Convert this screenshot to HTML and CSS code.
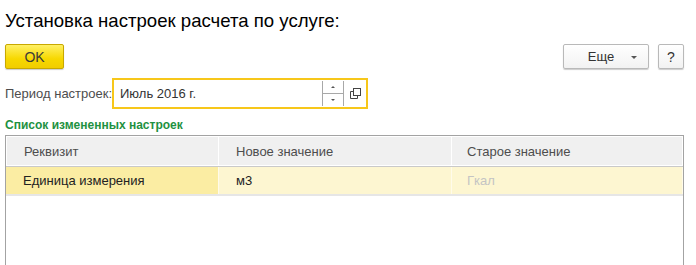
FILE: index.html
```html
<!DOCTYPE html>
<html lang="ru">

<head>
    <meta charset="UTF-8">
    <title>Установка настроек расчета по услуге</title>
    <link rel="stylesheet" href="styles.css">
</head>

<body>
    <div class="form">
        <h1 class="form-title">Установка настроек расчета по услуге:</h1>

        <!-- Command bar -->
        <div class="command-bar">
            <button class="btn btn-ok">OK</button>
            <div class="command-bar__right">
                <button class="btn btn-more">Еще <span class="btn-more__arrow"></span></button>
                <button class="btn btn-help">?</button>
            </div>
        </div>

        <!-- Period field -->
        <div class="field-row">
            <label class="field-label">Период настроек:</label>
            <div class="field-input">
                <span class="field-input__value">Июль 2016 г.</span>
                <div class="spin">
                    <span class="spin__up"></span>
                    <span class="spin__down"></span>
                </div>
                <span class="field-input__open">
                    <svg width="11" height="11" viewBox="0 0 11 11">
                        <rect x="3.5" y="0.5" width="7" height="7" fill="none" stroke="#444" />
                        <path d="M0.5 3.5 H3 M0.5 3.5 V10.5 H7.5 V8" fill="none" stroke="#444" />
                    </svg>
                </span>
            </div>
        </div>

        <div class="group-title">Список измененных настроек</div>

        <!-- Table -->
        <div class="grid">
            <div class="grid__row grid__head">
                <div class="grid__cell col-1">Реквизит</div>
                <div class="grid__cell col-2">Новое значение</div>
                <div class="grid__cell col-3">Старое значение</div>
            </div>
            <div class="grid__row grid__current">
                <div class="grid__cell col-1">Единица измерения</div>
                <div class="grid__cell col-2">м3</div>
                <div class="grid__cell col-3 muted">Гкал</div>
            </div>
            <div class="grid__empty"></div>
        </div>
    </div>
</body>

</html>
```

FILE: styles.css
```css
* {
    margin: 0;
    padding: 0;
    box-sizing: border-box;
}

body {
    font-family: "Liberation Sans", Arial, sans-serif;
    font-size: 13px;
    color: #333333;
    background-color: #ffffff;
    overflow: hidden;
}

.form {
    padding: 10px 12px 0 5px;
}

.form-title {
    font-size: 18.6px;
    font-weight: normal;
    line-height: 22px;
    color: #000000;
}

/* Command bar */
.command-bar {
    display: flex;
    justify-content: space-between;
    margin-top: 12px;
    height: 25px;
}

.command-bar__right {
    display: flex;
    gap: 9px;
}

.btn {
    font-family: "Liberation Sans", Arial, sans-serif;
    font-size: 13px;
    height: 25px;
    border-radius: 2px;
    cursor: pointer;
}

.btn-ok {
    width: 59px;
    color: #3a3a3a;
    font-size: 14px;
    background: linear-gradient(#fff064, #f7d800 60%, #f1cd00);
    border: 1px solid #c8a800;
    box-shadow: 0 1px 1px rgba(0, 0, 0, 0.2);
}

.btn-more,
.btn-help {
    color: #333333;
    background: linear-gradient(#ffffff, #f2f2f2);
    border: 1px solid #b9b9b9;
    box-shadow: 0 1px 1px rgba(0, 0, 0, 0.2);
}

.btn-more {
    width: 86px;
    position: relative;
    padding-right: 10px;
}

.btn-more__arrow {
    position: absolute;
    right: 11px;
    top: 11px;
    border-left: 3px solid transparent;
    border-right: 3px solid transparent;
    border-top: 3px solid #555555;
}

.btn-help {
    width: 26px;
    font-size: 14px;
}

/* Period field */
.field-row {
    display: flex;
    align-items: center;
    margin-top: 9px;
}

.field-label {
    color: #4d4d4d;
    width: 107px;
    white-space: nowrap;
}

.field-input {
    display: flex;
    align-items: center;
    width: 256px;
    height: 31px;
    border: 2px solid #f7c71a;
    padding-left: 6px;
    color: #333333;
}

.field-input__value {
    flex: 1;
}

.spin {
    display: flex;
    flex-direction: column;
    width: 22px;
    height: 25px;
    border-left: 1px solid #a8a8a8;
    border-right: 1px solid #a8a8a8;
}

.spin__up,
.spin__down {
    flex: 1;
    display: flex;
    justify-content: center;
    align-items: center;
}

.spin__up {
    border-bottom: 1px solid #a8a8a8;
}

.spin__up::after {
    content: "";
    border-left: 2px solid transparent;
    border-right: 2px solid transparent;
    border-bottom: 2px solid #555555;
}

.spin__down::after {
    content: "";
    border-left: 2px solid transparent;
    border-right: 2px solid transparent;
    border-top: 2px solid #555555;
}

.field-input__open {
    width: 22px;
    display: flex;
    justify-content: center;
    align-items: center;
}

.group-title {
    margin-top: 9px;
    font-size: 12px;
    font-weight: bold;
    color: #1e9141;
    line-height: 14px;
}

/* Table */
.grid {
    margin-top: 3px;
    border: 1px solid #a3a3a3;
    border-bottom: none;
    height: 140px;
}

.grid__row {
    display: grid;
    grid-template-columns: 213px 233px 1fr;
}

.grid__head {
    height: 31px;
    background-color: #f0f0f0;
    color: #4d4d4d;
    border-bottom: 1px solid #c9c9c9;
}

.grid__head .grid__cell {
    border: 1px solid #ffffff;
    border-left: none;
}

.grid__head .col-1 {
    border-left: 1px solid #ffffff;
}

.grid__current {
    height: 29px;
    background-color: #fdf6d1;
    color: #222222;
    border-bottom: 2px solid #e6e6e6;
}

.grid__current .col-1 {
    background-color: #fbeda3;
}

.grid__current .grid__cell {
    border-right: 1px solid #fffbea;
}

.grid__cell {
    display: flex;
    align-items: center;
    padding-left: 17px;
}

.grid__cell.col-3 {
    padding-left: 15px;
}

.muted {
    color: #c4c4c4;
}
```
